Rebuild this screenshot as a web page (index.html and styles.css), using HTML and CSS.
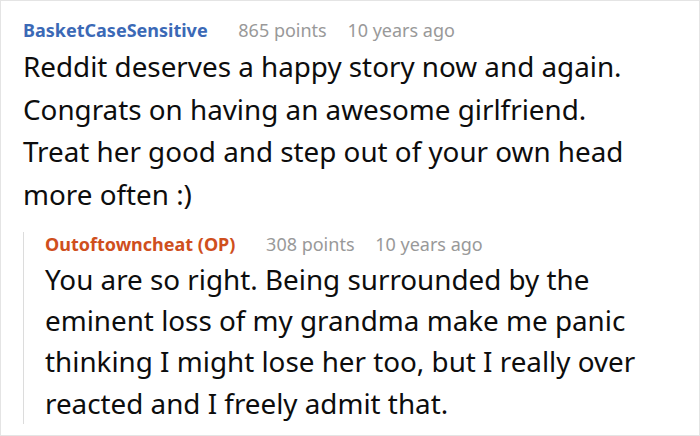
FILE: index.html
```html
<!DOCTYPE html>
<html>
<head>
<meta charset="utf-8">
<link rel="stylesheet" href="styles.css">
</head>
<body>
<div class="thread">
  <div class="comment">
    <div class="meta">
      <span class="author">BasketCaseSensitive</span>
      <span class="points">865 points</span>
      <span class="time">10 years ago</span>
    </div>
    <p class="body">Reddit deserves a happy story now and again. Congrats on having an awesome girlfriend. Treat her good and step out of your own head more often :)</p>
    <div class="reply">
      <div class="meta">
        <span class="author op">Outoftowncheat (OP)</span>
        <span class="points">308 points</span>
        <span class="time">10 years ago</span>
      </div>
      <p class="body">You are so right. Being surrounded by the eminent loss of my grandma make me panic thinking I might lose her too, but I really over reacted and I freely admit that.</p>
    </div>
  </div>
</div>
</body>
</html>
```
FILE: styles.css
```css
html, body {
  margin: 0;
  padding: 0;
  background: #ffffff;
}
.thread {
  box-sizing: border-box;
  width: 700px;
  height: 436px;
  border: 1px solid #e4e4e4;
  overflow: hidden;
  font-family: "Noto Sans", "Open Sans", sans-serif;
}
.comment {
  padding: 17px 49px 0 22px;
}
.meta {
  font-size: 18px;
  line-height: 24px;
  height: 24px;
  white-space: nowrap;
  color: #999999;
}
.author {
  font-weight: bold;
  color: #3b69b6;
}
.author.op {
  color: #cf4f1d;
}
.points {
  margin-left: 26px;
}
.time {
  margin-left: 16px;
}
.body {
  margin: 3px 0 0 0;
  font-size: 27.8px;
  line-height: 42.5px;
  color: #0d0d0d;
}
.reply {
  margin-top: 26.5px;
  border-left: 1px solid #dcdcdc;
  padding-left: 21px;
}
.reply .meta {
  margin-top: -10px;
}
.reply .body {
  line-height: 41.4px;
  margin-bottom: -7px;
}
```
